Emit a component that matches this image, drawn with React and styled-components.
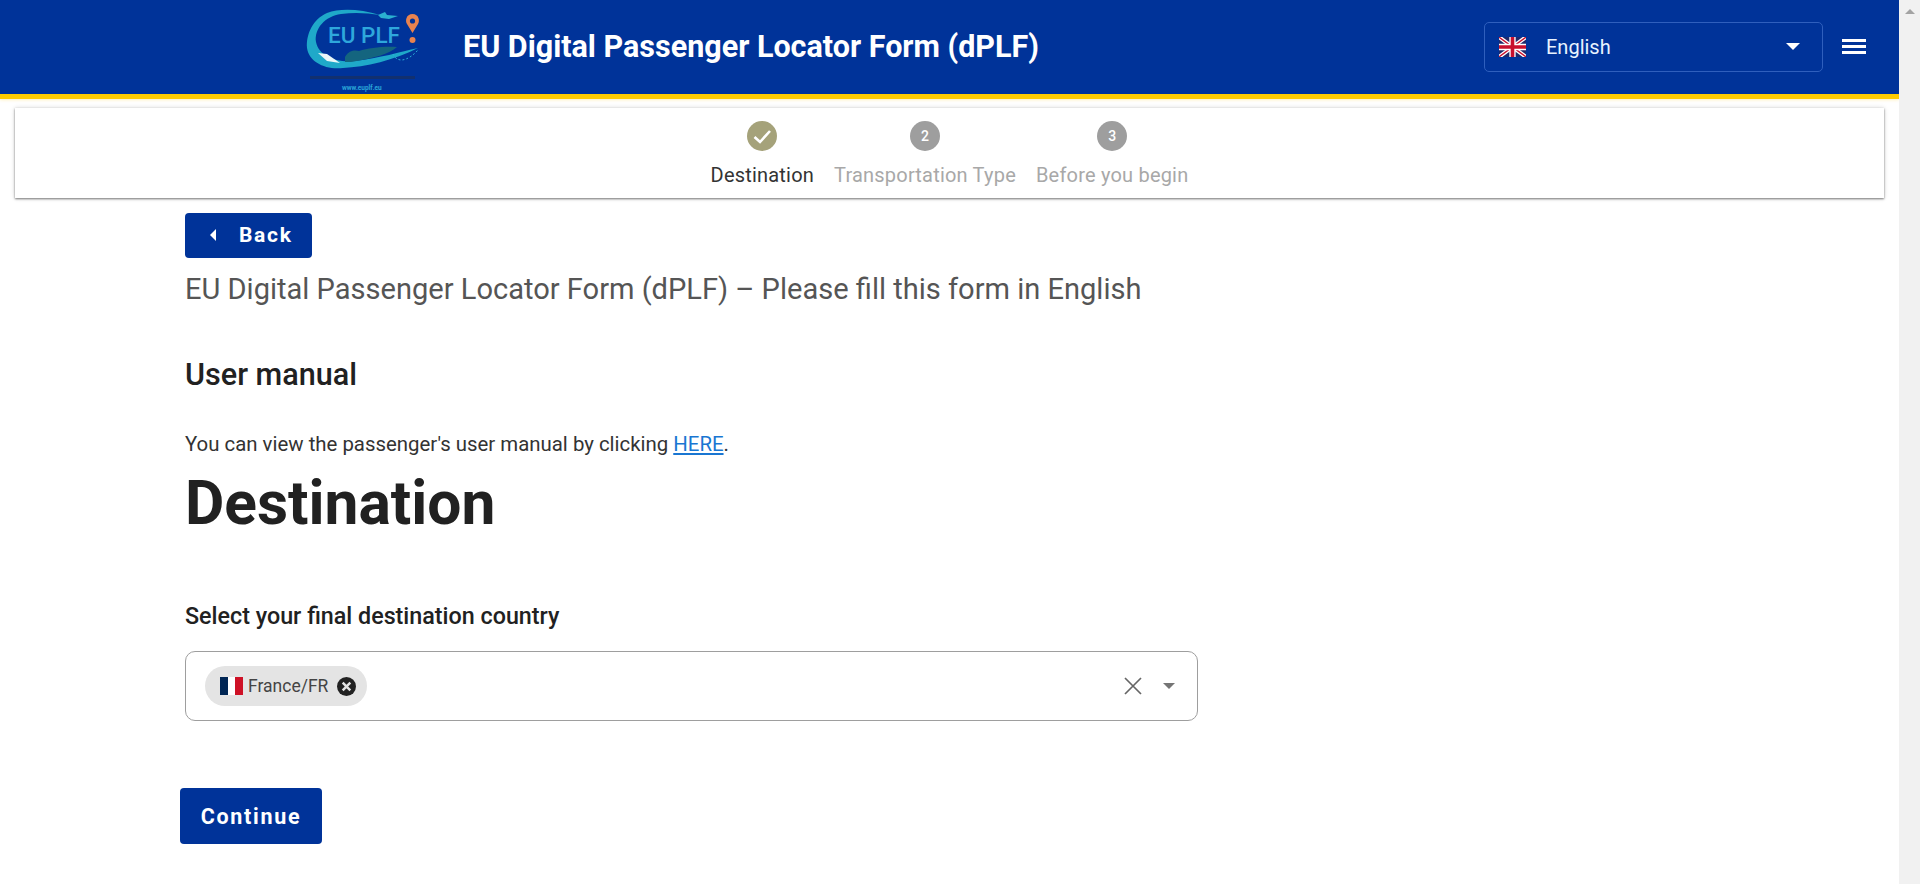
import React from 'react';
import styled, { createGlobalStyle } from 'styled-components';

const blue = '#003399';

const GlobalStyle = createGlobalStyle`
  html, body {
    margin: 0;
    padding: 0;
    height: 100%;
    overflow: hidden;
    background: #fff;
    font-family: Roboto, "Liberation Sans", sans-serif;
  }
`;

const Page = styled.div`
  display: flex;
  height: 884px;
  overflow: hidden;
`;

const Main = styled.div`
  flex: 1;
  min-width: 0;
`;

const Scrollbar = styled.div`
  width: 21px;
  background: #f1f1f1;
  display: flex;
  justify-content: center;
  padding-top: 9px;
  box-sizing: border-box;

  &::before {
    content: "";
    width: 0;
    height: 0;
    border-left: 5px solid transparent;
    border-right: 5px solid transparent;
    border-bottom: 5px solid #a3a3a3;
  }
`;

const Header = styled.header`
  height: 99px;
  box-sizing: border-box;
  background: ${blue};
  border-bottom: 5px solid #ffcc00;
  box-shadow: 0 1px 3px rgba(255, 204, 0, 0.25);
  display: flex;
  align-items: center;
  padding: 0 33px 2px 305px;
`;

const LogoBox = styled.div`
  width: 116px;
  height: 86px;
  flex: none;
  margin-right: 42px;
`;

const SiteTitle = styled.h1`
  margin: 0;
  flex: 1;
  color: #fff;
  font-size: 30.5px;
  font-weight: 700;
`;

const LangSelect = styled.div`
  width: 339px;
  height: 50px;
  margin: 1px 19px 0 0;
  box-sizing: border-box;
  border: 1px solid #2f5fbd;
  border-radius: 5px;
  display: flex;
  align-items: center;
  padding: 0 22px 0 14px;
  color: #e8f3ff;
  font-size: 20px;
`;

const LangName = styled.span`
  flex: 1;
  margin-left: 20px;
`;

const Caret = styled.span`
  width: 0;
  height: 0;
  border-left: ${p => p.$size}px solid transparent;
  border-right: ${p => p.$size}px solid transparent;
  border-top: ${p => p.$size}px solid ${p => p.$color};
`;

const Burger = styled.div`
  width: 24px;
  height: 15px;
  margin-top: 1px;
  display: flex;
  flex-direction: column;
  justify-content: space-between;

  & > i {
    display: block;
    height: 3px;
    background: #fff;
  }
`;

const StepCard = styled.div`
  margin: 9px 15px 0;
  height: 90px;
  background: #fff;
  box-shadow: 0 1px 2px rgba(0, 0, 0, 0.5), 0 0 5px rgba(0, 0, 0, 0.14);
  display: flex;
  justify-content: center;
  gap: 20px;
  padding-top: 13px;
  box-sizing: border-box;
`;

const Step = styled.div`
  display: flex;
  flex-direction: column;
  align-items: center;
  gap: 12px;
`;

const StepDot = styled.div`
  width: 30px;
  height: 30px;
  border-radius: 50%;
  background: ${p => (p.$done ? '#a5a27a' : '#9e9e9e')};
  color: #fff;
  font-size: 14px;
  font-weight: 500;
  display: flex;
  align-items: center;
  justify-content: center;
`;

const StepLabel = styled.div`
  font-size: 20px;
  letter-spacing: 0.2px;
  color: ${p => (p.$active ? '#333' : '#a8a8a8')};
`;

const Content = styled.main`
  padding: 15px 0 0 185px;
`;

const Button = styled.button`
  display: flex;
  align-items: center;
  border: 0;
  border-radius: 4px;
  background: ${blue};
  color: #fff;
  font-family: inherit;
  font-weight: 700;
  letter-spacing: 1.7px;
  padding: 0;
`;

const BackButton = styled(Button)`
  width: 127px;
  height: 45px;
  gap: 23px;
  padding: 0 0 2px 25px;
  font-size: 21px;
`;

const BackArrow = styled.span`
  width: 0;
  height: 0;
  border-top: 6px solid transparent;
  border-bottom: 6px solid transparent;
  border-right: 6px solid #fff;
`;

const Lead = styled.h2`
  margin: 13px 0 0;
  font-size: 29.05px;
  line-height: 36px;
  font-weight: 400;
  color: #555;
`;

const Subhead = styled.h3`
  margin: 50px 0 0;
  font-size: 30.6px;
  line-height: 36px;
  font-weight: 500;
  color: #212121;
`;

const Paragraph = styled.p`
  margin: 38px 0 0;
  font-size: 20.4px;
  line-height: 26px;
  color: #333;

  & a {
    color: #1976d2;
    text-decoration: underline;
  }
`;

const PageTitle = styled.h2`
  margin: 12px 0 0;
  font-size: 60.5px;
  line-height: 70px;
  font-weight: 700;
  color: #212121;
`;

const FieldLabel = styled.div`
  margin-top: 63px;
  font-size: 23.3px;
  line-height: 28px;
  font-weight: 500;
  color: #212121;
`;

const Field = styled.div`
  width: 1013px;
  height: 70px;
  margin-top: 21px;
  box-sizing: border-box;
  border: 1px solid #9e9e9e;
  border-radius: 10px;
  display: flex;
  align-items: center;
  padding: 0 22px 0 19px;
`;

const Chip = styled.div`
  height: 40px;
  border-radius: 20px;
  background: #e4e4e4;
  display: flex;
  align-items: center;
  padding: 0 11px 0 15px;
  font-size: 17.5px;
  color: #444;
`;

const ChipText = styled.span`
  margin: 0 9px 0 5px;
`;

const FieldFill = styled.div`
  flex: 1;
`;

const ClearBtn = styled.div`
  display: flex;
  margin-right: 21px;
`;

const FlagFr = styled.div`
  width: 23px;
  height: 18px;
  background: linear-gradient(90deg, #002654 33.3%, #fff 33.3%, #fff 66.6%, #ce1126 66.6%);
`;

const ContinueWrap = styled.div`
  margin: 67px 0 0 -5px;
`;

const ContinueButton = styled(Button)`
  width: 142px;
  height: 56px;
  justify-content: center;
  font-size: 21.5px;
`;

const Logo = () => (
  <svg width="116" height="86" viewBox="0 -1 116 86" style={{ overflow: 'visible' }}>
    <path d="M75 11 C55 5 35 4 22 9 C8 15 1 30 2 44 C4 58 20 66 38 64 C60 63 90 56 113 44 C95 48 75 54 50 57 C30 59 14 52 11 38 C9 25 20 12 36 10 C50 8 62 9 75 11 Z" fill="#1fa9c9" />
    <path d="M73 11 L80 8 L82 11 L93 12 L84 15 L76 14 Z" fill="#2bb0d0" />
    <text x="23" y="39" fontFamily="Roboto, sans-serif" fontSize="22.5" fontWeight="500" fill="#2ea7dc">EU PLF</text>
    <path d="M13 49 L22 50 L35 59 L22 57 Z" fill="#eaf6f8" />
    <path d="M40 53 C44 46 50 46 54 47 C64 44 78 42 92 43 C84 50 70 54 46 58 L40 58 Z" fill="#14657f" />
    <path d="M88 50 C92 59 102 58 113 46" fill="none" stroke="#2ab0d6" strokeWidth="1" strokeDasharray="2 2" />
    <path d="M107.5 10 C101 10 100 17 102 20 L107.5 29 L113 20 C115 17 114 10 107.5 10 Z" fill="#e8834f" />
    <circle cx="107.5" cy="17" r="2.6" fill={blue} />
    <circle cx="107.5" cy="36" r="3" fill="#e8834f" />
    <rect x="5" y="72" width="105" height="3" fill="#12306f" />
    <text x="37" y="86" fontFamily="Roboto, sans-serif" fontSize="6.5" fontWeight="700" fill="#2aa6d8">www.euplf.eu</text>
  </svg>
);

const FlagUk = () => (
  <svg width="27" height="20" viewBox="0 0 60 44">
    <rect width="60" height="44" fill="#1f2a6b" />
    <path d="M0 0 L60 44 M60 0 L0 44" stroke="#fff" strokeWidth="9" />
    <path d="M0 0 L60 44 M60 0 L0 44" stroke="#c8102e" strokeWidth="3" />
    <path d="M30 0 V44 M0 22 H60" stroke="#fff" strokeWidth="14" />
    <path d="M30 0 V44 M0 22 H60" stroke="#c8102e" strokeWidth="8" />
  </svg>
);

const CheckIcon = () => (
  <svg width="20" height="20" viewBox="0 0 20 20">
    <path d="M2.5 11 L8 16 L18 5" fill="none" stroke="#fff" strokeWidth="2.6" />
  </svg>
);

const ChipClose = () => (
  <svg width="19" height="19" viewBox="0 0 20 20">
    <circle cx="10" cy="10" r="10" fill="#222" />
    <path d="M6 6 L14 14 M14 6 L6 14" stroke="#e4e4e4" strokeWidth="2.6" />
  </svg>
);

const ClearIcon = () => (
  <svg width="18" height="18" viewBox="0 0 18 18">
    <path d="M1 1 L17 17 M17 1 L1 17" stroke="#666" strokeWidth="1.7" />
  </svg>
);

const App = () => (
  <Page>
    <GlobalStyle />
    <Main>
      <Header>
        <LogoBox><Logo /></LogoBox>
        <SiteTitle>EU Digital Passenger Locator Form (dPLF)</SiteTitle>
        <LangSelect>
          <FlagUk />
          <LangName>English</LangName>
          <Caret $size={7} $color="#fff" />
        </LangSelect>
        <Burger><i /><i /><i /></Burger>
      </Header>

      <StepCard>
        <Step>
          <StepDot $done><CheckIcon /></StepDot>
          <StepLabel $active>Destination</StepLabel>
        </Step>
        <Step>
          <StepDot>2</StepDot>
          <StepLabel>Transportation Type</StepLabel>
        </Step>
        <Step>
          <StepDot>3</StepDot>
          <StepLabel>Before you begin</StepLabel>
        </Step>
      </StepCard>

      <Content>
        <BackButton><BackArrow />Back</BackButton>
        <Lead>EU Digital Passenger Locator Form (dPLF) – Please fill this form in English</Lead>
        <Subhead>User manual</Subhead>
        <Paragraph>You can view the passenger's user manual by clicking <a href="#manual">HERE</a>.</Paragraph>
        <PageTitle>Destination</PageTitle>
        <FieldLabel>Select your final destination country</FieldLabel>
        <Field>
          <Chip>
            <FlagFr />
            <ChipText>France/FR</ChipText>
            <ChipClose />
          </Chip>
          <FieldFill />
          <ClearBtn><ClearIcon /></ClearBtn>
          <Caret $size={6.5} $color="#757575" />
        </Field>
        <ContinueWrap>
          <ContinueButton>Continue</ContinueButton>
        </ContinueWrap>
      </Content>
    </Main>
    <Scrollbar />
  </Page>
);

export default App;
